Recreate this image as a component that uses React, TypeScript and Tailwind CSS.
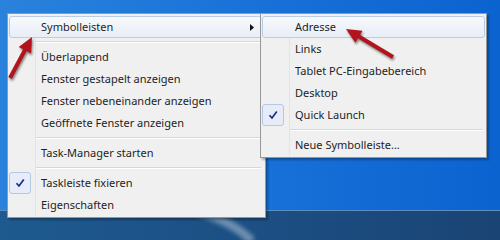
import React from 'react';

type Row =
  | { kind: 'item'; label: string; checked?: boolean; sub?: boolean; active?: boolean }
  | { kind: 'sep' };

const MAIN_MENU: Row[] = [
  { kind: 'item', label: 'Symbolleisten', sub: true, active: true },
  { kind: 'sep' },
  { kind: 'item', label: 'Überlappend' },
  { kind: 'item', label: 'Fenster gestapelt anzeigen' },
  { kind: 'item', label: 'Fenster nebeneinander anzeigen' },
  { kind: 'item', label: 'Geöffnete Fenster anzeigen' },
  { kind: 'sep' },
  { kind: 'item', label: 'Task-Manager starten' },
  { kind: 'sep' },
  { kind: 'item', label: 'Taskleiste fixieren', checked: true },
  { kind: 'item', label: 'Eigenschaften' },
];

const TOOLBARS_MENU: Row[] = [
  { kind: 'item', label: 'Adresse', active: true },
  { kind: 'item', label: 'Links' },
  { kind: 'item', label: 'Tablet PC-Eingabebereich' },
  { kind: 'item', label: 'Desktop' },
  { kind: 'item', label: 'Quick Launch', checked: true },
  { kind: 'sep' },
  { kind: 'item', label: 'Neue Symbolleiste...' },
];

const CheckMark = () => (
  <svg width="10" height="10" viewBox="0 0 10 10">
    <path d="M1.5 5.2 L4 8 L8.8 1.5" fill="none" stroke="#1b2a8c" strokeWidth="1.7" />
  </svg>
);

// one Win7-style context menu
const ContextMenu: React.FC<{ rows: Row[]; className: string; gutter: string }> = ({ rows, className, gutter }) => (
  <div
    className={`absolute bg-[#f0f0f0] border border-[#979797] px-[1px] pt-[2px] pb-[1px] shadow-[2px_2px_2px_rgba(0,0,0,0.3)] ${className}`}
  >
    {rows.map((row, i) =>
      row.kind === 'sep' ? (
        <div key={i} className="flex h-[8px]">
          <div className={`${gutter} shrink-0 border-r border-[#e2e3e3]`} />
          <div className="flex-1 flex flex-col justify-center mr-[3px]">
            <div className="h-px bg-[#d7d7d7]" />
            <div className="h-px bg-white" />
          </div>
        </div>
      ) : (
        <div
          key={i}
          className={`flex h-[22px] items-center rounded-[3px] border ${
            row.active
              ? 'border-[#b9cde6] bg-gradient-to-b from-[#f7f9fc] to-[#e8eef6]'
              : 'border-transparent'
          }`}
        >
          <div
            className={`${gutter} shrink-0 h-[22px] -my-px -ml-px flex items-center ${
              row.active ? '' : 'border-r border-[#e2e3e3]'
            }`}
          >
            {row.checked && (
              <div className="w-[22px] h-[22px] rounded-[3px] border border-[#b4c8e6] bg-[#e6ecf8] flex items-center justify-center">
                <CheckMark />
              </div>
            )}
          </div>
          <span className="flex-1 pl-[5px] text-[11px] text-[#1e1e1e] whitespace-nowrap">{row.label}</span>
          {row.sub && (
            <svg width="4" height="7" viewBox="0 0 4 7" className="mr-[9px]">
              <path d="M0 0 L4 3.5 L0 7 Z" fill="#111" />
            </svg>
          )}
        </div>
      )
    )}
  </div>
);

export default function App() {
  return (
    <div
      className="relative w-[500px] h-[240px] overflow-hidden flex flex-col"
      style={{ fontFamily: '"Noto Sans", "Open Sans", sans-serif' }}
    >
      {/* desktop */}
      <div className="flex-1 bg-gradient-to-r from-[#2a82dc] via-[#1872d8] to-[#0b63d0]" />
      {/* taskbar */}
      <div className="relative h-[30px] border-t border-[#5d8cc0] bg-gradient-to-r from-[#1e5a8f] via-[#1c4f84] to-[#1a4474] overflow-hidden">
        <svg className="absolute left-0 top-0" width="500" height="30">
          <path d="M196 0 Q232 10 252 30" fill="none" stroke="rgba(255,255,255,0.35)" strokeWidth="9" className="blur-[2px]" />
        </svg>
      </div>

      <ContextMenu rows={MAIN_MENU} gutter="w-[27px]" className="left-[7px] top-[13px] w-[259px]" />
      <ContextMenu rows={TOOLBARS_MENU} gutter="w-[28px]" className="left-[260px] top-[13px] w-[227px]" />

      {/* red annotation arrows */}
      <svg
        className="absolute left-0 top-0 pointer-events-none drop-shadow-[1px_2px_1px_rgba(0,0,0,0.45)]"
        width="500"
        height="240"
      >
        <line x1="10" y1="78" x2="25.5" y2="49" stroke="#b3141c" strokeWidth="4" />
        <polygon points="32,37 31.1,53.5 18.7,46.9" fill="#b3141c" />
        <line x1="393" y1="57" x2="358" y2="36" stroke="#b3141c" strokeWidth="4" />
        <polygon points="346,29 362.5,30.7 355.3,42.7" fill="#b3141c" />
      </svg>
    </div>
  );
}
